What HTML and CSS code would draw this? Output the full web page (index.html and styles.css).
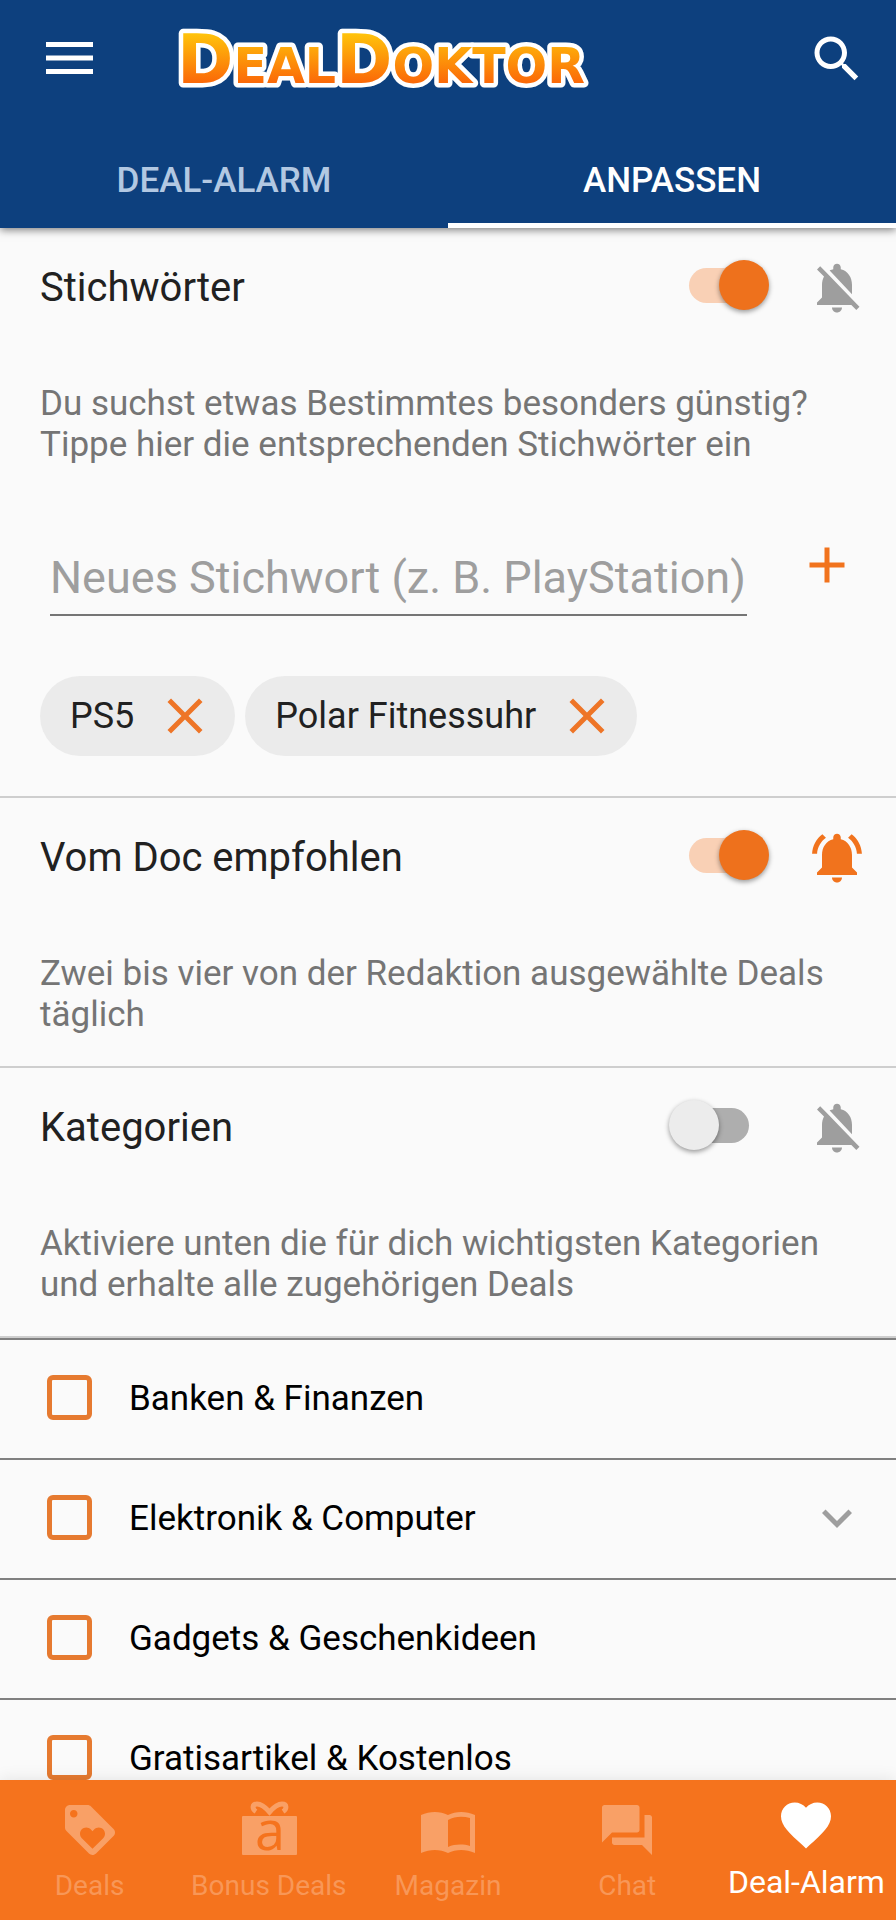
FILE: index.html
```html
<!DOCTYPE html>
<html lang="de">
<head>
    <meta charset="UTF-8">
    <meta name="viewport" content="width=device-width, initial-scale=1.0">
    <title>DealDoktor - Deal-Alarm anpassen</title>
    <link rel="stylesheet" href="styles.css">
</head>
<body>
    <header class="app-header">
        <div class="toolbar">
            <button class="icon-btn" aria-label="Menü">
                <svg class="icon" viewBox="0 0 60 60"><path d="M6 13h47v5H6zm0 13.500h47v5H6zm0 13.500h47v5H6z"/></svg>
            </button>
            <a class="logo" href="#" aria-label="DealDoktor">
                <svg width="430" height="100" viewBox="0 0 430 100">
                    <defs>
                        <linearGradient id="logoFill" gradientUnits="userSpaceOnUse" x1="0" y1="23" x2="0" y2="73">
                            <stop offset="0" stop-color="#ffc60b"/>
                            <stop offset="1" stop-color="#fb6a08"/>
                        </linearGradient>
                    </defs>
                    <text class="logo-text" x="1" y="74">D<tspan class="logo-small">EAL</tspan>D<tspan class="logo-small">OKTOR</tspan></text>
                </svg>
            </a>
            <button class="icon-btn" aria-label="Suche">
                <svg class="icon" viewBox="0 0 24 24"><path d="M15.500 14h-.79l-.28-.27C15.410 12.590 16 11.110 16 9.500 16 5.910 13.090 3 9.500 3S3 5.910 3 9.500 5.910 16 9.500 16c1.610 0 3.090-.59 4.230-1.570l.27.28v.79l5 4.990L20.490 19l-4.990-5zm-6 0C7.010 14 5 11.990 5 9.500S7.010 5 9.500 5 14 7.010 14 9.500 11.990 14 9.500 14z"/></svg>
            </button>
        </div>
        <nav class="tabs">
            <a class="tab" href="#">DEAL-ALARM</a>
            <a class="tab active" href="#">ANPASSEN</a>
        </nav>
    </header>

    <main class="content">
        <!-- Keywords -->
        <section class="section">
            <div class="section-head">
                <h2><label for="toggleKeywords">Stichwörter</label></h2>
                <input class="toggle" type="checkbox" role="switch" id="toggleKeywords" checked>
                <button class="icon-btn muted" aria-label="Benachrichtigung aus">
                    <svg class="icon" viewBox="0 -1 24 24"><path d="M20 18.690L7.840 6.140 5.270 3.490 4 4.760l2.800 2.800v.01c-.52.99-.8 2.160-.8 3.420v5l-2 2v1h13.730l2 2L21 19.720l-1-1.030zM12 22c1.110 0 2-.89 2-2h-4c0 1.110.89 2 2 2zm6-7.320V11c0-3.080-1.640-5.640-4.500-6.320V4c0-.83-.67-1.500-1.500-1.500s-1.500.67-1.500 1.500v.68c-.15.03-.29.08-.42.12-.1.03-.2.07-.3.11h-.01c-.01 0-.01 0-.02.01-.23.09-.46.2-.68.31 0 0-.01 0-.01.01L18 14.680z"/></svg>
                </button>
            </div>
            <p class="description">Du suchst etwas Bestimmtes besonders günstig? Tippe hier die entsprechenden Stichwörter ein</p>
            <div class="keyword-form">
                <input class="keyword-input" type="text" aria-label="Neues Stichwort" placeholder="Neues Stichwort (z. B. PlayStation)">
                <button class="icon-btn accent" aria-label="Hinzufügen">
                    <svg class="icon" viewBox="0 0 24 24"><path d="M19 13h-6v6h-2v-6H5v-2h6V5h2v6h6v2z"/></svg>
                </button>
            </div>
            <div class="chips">
                <span class="chip">PS5
                    <button class="chip-remove" aria-label="PS5 entfernen">
                        <svg class="icon" viewBox="0 0 24 24"><path d="M19 6.410L17.590 5 12 10.590 6.410 5 5 6.410 10.590 12 5 17.590 6.410 19 12 13.410 17.590 19 19 17.590 13.410 12z"/></svg>
                    </button>
                </span>
                <span class="chip">Polar Fitnessuhr
                    <button class="chip-remove" aria-label="Polar Fitnessuhr entfernen">
                        <svg class="icon" viewBox="0 0 24 24"><path d="M19 6.410L17.590 5 12 10.590 6.410 5 5 6.410 10.590 12 5 17.590 6.410 19 12 13.410 17.590 19 19 17.590 13.410 12z"/></svg>
                    </button>
                </span>
            </div>
        </section>

        <!-- Recommended -->
        <section class="section">
            <div class="section-head">
                <h2><label for="toggleDoc">Vom Doc empfohlen</label></h2>
                <input class="toggle" type="checkbox" role="switch" id="toggleDoc" checked>
                <button class="icon-btn accent" aria-label="Benachrichtigung an">
                    <svg class="icon" viewBox="0 -1 24 24"><path d="M7.580 4.080L6.150 2.650C3.750 4.480 2.170 7.300 2.030 10.500h2c.15-2.650 1.510-4.970 3.550-6.420zm12.390 6.420h2c-.15-3.200-1.730-6.020-4.120-7.850l-1.420 1.430c2.020 1.450 3.390 3.770 3.540 6.420zM18 11c0-3.070-1.640-5.640-4.500-6.320V4c0-.83-.67-1.500-1.500-1.500s-1.500.67-1.500 1.500v.68C7.630 5.360 6 7.920 6 11v5l-2 2v1h16v-1l-2-2v-5zm-6 11c.14 0 .27-.01.4-.04.65-.14 1.180-.58 1.440-1.180.1-.24.15-.5.15-.78h-4c.01 1.100.9 2 2.010 2z"/></svg>
                </button>
            </div>
            <p class="description">Zwei bis vier von der Redaktion ausgewählte Deals täglich</p>
        </section>

        <!-- Categories -->
        <section class="section">
            <div class="section-head">
                <h2><label for="toggleCategories">Kategorien</label></h2>
                <input class="toggle" type="checkbox" role="switch" id="toggleCategories">
                <button class="icon-btn muted" aria-label="Benachrichtigung aus">
                    <svg class="icon" viewBox="0 -1 24 24"><path d="M20 18.690L7.840 6.140 5.270 3.490 4 4.760l2.800 2.800v.01c-.52.99-.8 2.160-.8 3.420v5l-2 2v1h13.730l2 2L21 19.720l-1-1.030zM12 22c1.110 0 2-.89 2-2h-4c0 1.110.89 2 2 2zm6-7.320V11c0-3.080-1.640-5.640-4.500-6.320V4c0-.83-.67-1.500-1.500-1.500s-1.500.67-1.500 1.500v.68c-.15.03-.29.08-.42.12-.1.03-.2.07-.3.11h-.01c-.01 0-.01 0-.02.01-.23.09-.46.2-.68.31 0 0-.01 0-.01.01L18 14.680z"/></svg>
                </button>
            </div>
            <p class="description">Aktiviere unten die für dich wichtigsten Kategorien und erhalte alle zugehörigen Deals</p>
        </section>

        <ul class="category-list">
            <li class="category">
                <label><input class="checkbox" type="checkbox">Banken &amp; Finanzen</label>
            </li>
            <li class="category">
                <label><input class="checkbox" type="checkbox">Elektronik &amp; Computer</label>
                <button class="icon-btn muted" aria-label="Aufklappen">
                    <svg class="icon" viewBox="0 0 24 24"><path d="M16.590 8.590L12 13.170 7.410 8.590 6 10l6 6 6-6z"/></svg>
                </button>
            </li>
            <li class="category">
                <label><input class="checkbox" type="checkbox">Gadgets &amp; Geschenkideen</label>
            </li>
            <li class="category">
                <label><input class="checkbox" type="checkbox">Gratisartikel &amp; Kostenlos</label>
            </li>
        </ul>
    </main>

    <nav class="bottom-nav">
        <a class="nav-item" href="#">
            <svg class="icon" viewBox="0 0 24 24"><path d="M21.410 11.580l-9-9C12.050 2.220 11.550 2 11 2H4c-1.100 0-2 .9-2 2v7c0 .55.22 1.050.59 1.420l9 9c.36.36.86.58 1.410.58.55 0 1.050-.22 1.410-.59l7-7c.37-.36.59-.86.59-1.410 0-.55-.23-1.060-.59-1.420zM5.500 7C4.670 7 4 6.330 4 5.500S4.670 4 5.500 4 7 4.670 7 5.500 6.330 7 5.500 7zm11.770 8.270L13 19.540l-4.270-4.270C8.280 14.810 8 14.190 8 13.500c0-1.380 1.120-2.500 2.500-2.500.69 0 1.320.28 1.770.74l.73.72.73-.73c.45-.45 1.080-.73 1.770-.73 1.380 0 2.500 1.120 2.500 2.500 0 .69-.28 1.320-.73 1.770z"/></svg>
            <span>Deals</span>
        </a>
        <a class="nav-item" href="#">
            <svg class="icon" viewBox="0 0 60 60">
                <rect x="3" y="16" width="55" height="39" rx="1"/>
                <path class="bow" d="M17 11.500C13 9 13 4 18 4C23 4 27 8 30.500 12C34 8 38 4 43 4C48 4 48 9 44 11.500"/>
                <text class="gift-letter" x="31" y="50">a</text>
            </svg>
            <span>Bonus Deals</span>
        </a>
        <a class="nav-item" href="#">
            <svg class="icon" viewBox="0 0 60 60"><path fill-rule="evenodd" d="M3 15C12 11 22 11 30 15C38 11 48 11 57 15V53C48 49 38 49 30 53C22 49 12 49 3 53zM30 20V47C37 44 45 44 52 46V18C45 16 37 16 30 20z"/></svg>
            <span>Magazin</span>
        </a>
        <a class="nav-item" href="#">
            <svg class="icon" viewBox="0 0 24 24"><path d="M21 6h-2v9H6v2c0 .55.45 1 1 1h11l4 4V7c0-.55-.45-1-1-1zm-4 6V3c0-.55-.45-1-1-1H3c-.55 0-1 .45-1 1v14l4-4h10c.55 0 1-.45 1-1z"/></svg>
            <span>Chat</span>
        </a>
        <a class="nav-item active" href="#">
            <svg class="icon" viewBox="0 0 24 24"><path d="M12 21.350l-1.450-1.320C5.400 15.360 2 12.280 2 8.500 2 5.420 4.420 3 7.500 3c1.740 0 3.410.81 4.500 2.090C13.090 3.810 14.760 3 16.500 3 19.580 3 22 5.420 22 8.500c0 3.780-3.400 6.860-8.550 11.540L12 21.350z"/></svg>
            <span>Deal-Alarm</span>
        </a>
    </nav>
</body>
</html>
```
FILE: styles.css
```css
* {
    margin: 0;
    padding: 0;
    box-sizing: border-box;
}

body {
    display: flex;
    flex-direction: column;
    height: 100vh;
    font-family: Roboto, "Liberation Sans", sans-serif;
    font-size: 35px;
    line-height: 41px;
    background-color: #fafafa;
    color: #212121;
}

a {
    color: inherit;
    text-decoration: none;
}

button {
    border: none;
    background: none;
    color: inherit;
    cursor: pointer;
}

.icon {
    display: block;
    width: 60px;
    height: 60px;
    fill: currentColor;
    overflow: visible;
}

.icon-btn {
    flex: none;
    width: 60px;
    height: 60px;
}

.accent {
    color: #f1731d;
}

.muted {
    color: #9e9e9e;
}

/* Header */
.app-header {
    flex: none;
    background-color: #0d407e;
    color: white;
    box-shadow: 0 2px 8px rgba(0, 0, 0, 0.5);
    z-index: 1;
}

.toolbar {
    display: flex;
    align-items: center;
    height: 118px;
    padding: 0 29px 0 40px;
}

.logo {
    flex: 1;
    padding-left: 76px;
}

.logo svg {
    display: block;
    overflow: visible;
}

.logo-text {
    font-family: "DejaVu Sans", sans-serif;
    font-weight: bold;
    font-size: 68px;
    fill: url(#logoFill);
    stroke: white;
    stroke-width: 9px;
    stroke-linejoin: round;
    paint-order: stroke;
}

.logo-small {
    font-size: 49px;
}

.tabs {
    display: flex;
    height: 110px;
}

.tab {
    flex: 1;
    padding-top: 42px;
    border-bottom: 5px solid transparent;
    text-align: center;
    font-weight: 500;
    color: #b2c8e2;
}

.tab.active {
    color: white;
    border-bottom-color: white;
}

/* Sections */
.content {
    flex: 1;
    min-height: 0;
    overflow: hidden;
}

.section {
    padding-bottom: 31px;
    border-bottom: 2px solid #cecece;
}

.section-head {
    display: flex;
    align-items: center;
    height: 114px;
    padding: 0 29px 0 40px;
}

.section-head h2 {
    flex: 1;
    padding-top: 4px;
    font-size: 40px;
    font-weight: normal;
    line-height: 47px;
}

.description {
    padding: 41px 40px 0;
    color: #757575;
}

.toggle {
    appearance: none;
    display: grid;
    align-items: center;
    width: 100px;
    height: 50px;
    margin-right: 38px;
    cursor: pointer;
}

.toggle::before {
    content: "";
    grid-area: 1 / 1;
    justify-self: center;
    width: 60px;
    height: 35px;
    border-radius: 18px;
    background-color: #aeaeae;
}

.toggle::after {
    content: "";
    grid-area: 1 / 1;
    width: 50px;
    height: 50px;
    border-radius: 50%;
    background-color: #ececec;
    box-shadow: 0 2px 5px rgba(0, 0, 0, 0.4);
}

.toggle:checked::before {
    background-color: #f9d0b5;
}

.toggle:checked::after {
    justify-self: end;
    background-color: #ee711c;
}

/* Keywords */
.keyword-form {
    display: flex;
    align-items: flex-start;
    gap: 50px;
    margin-top: 70px;
    padding: 0 39px 0 50px;
}

.keyword-input {
    flex: 1;
    min-width: 0;
    height: 81px;
    padding: 16px 0 10px;
    border: none;
    border-bottom: 2px solid #757575;
    outline: none;
    background: none;
    font-family: inherit;
    font-size: 45px;
    color: #212121;
}

.keyword-input::placeholder {
    color: #9e9e9e;
}

.chips {
    display: flex;
    flex-wrap: wrap;
    gap: 10px;
    margin-top: 60px;
    padding: 0 40px 9px;
}

.chip {
    display: flex;
    align-items: center;
    gap: 21px;
    height: 80px;
    padding: 0 20px 0 30px;
    border-radius: 40px;
    background-color: #ebebeb;
    font-size: 36px;
}

.chip-remove {
    color: #ee7527;
}

/* Categories */
.category-list {
    list-style: none;
}

.category {
    display: flex;
    align-items: center;
    height: 120px;
    padding: 0 29px 2px 47px;
    border-top: 2px solid #808080;
    color: black;
}

.category label {
    flex: 1;
    display: flex;
    align-items: center;
    gap: 37px;
}

.checkbox {
    appearance: none;
    width: 45px;
    height: 45px;
    margin-bottom: 2px;
    border: 5px solid #e67a30;
    border-radius: 6px;
}

.checkbox:checked {
    background-color: #e67a30;
}

/* Bottom navigation */
.bottom-nav {
    flex: none;
    display: flex;
    height: 140px;
    background-color: #f5731d;
    color: #f9a066;
    box-shadow: 0 0 16px rgba(0, 0, 0, 0.1);
    z-index: 1;
}

.nav-item {
    flex: 1 1 0;
    min-width: 0;
    display: flex;
    flex-direction: column;
    align-items: center;
    gap: 9px;
    padding-top: 20px;
    font-size: 28px;
    line-height: 33px;
    white-space: nowrap;
}

.nav-item span {
    opacity: 0.8;
}

.nav-item.active {
    padding-top: 15px;
    font-size: 32px;
    line-height: 37px;
    color: white;
}

.nav-item.active span {
    opacity: 1;
}

.bow {
    fill: none;
    stroke: currentColor;
    stroke-width: 5px;
}

.gift-letter {
    font-family: "Open Sans", sans-serif;
    font-size: 54px;
    text-anchor: middle;
    fill: #f5731d;
}
```
